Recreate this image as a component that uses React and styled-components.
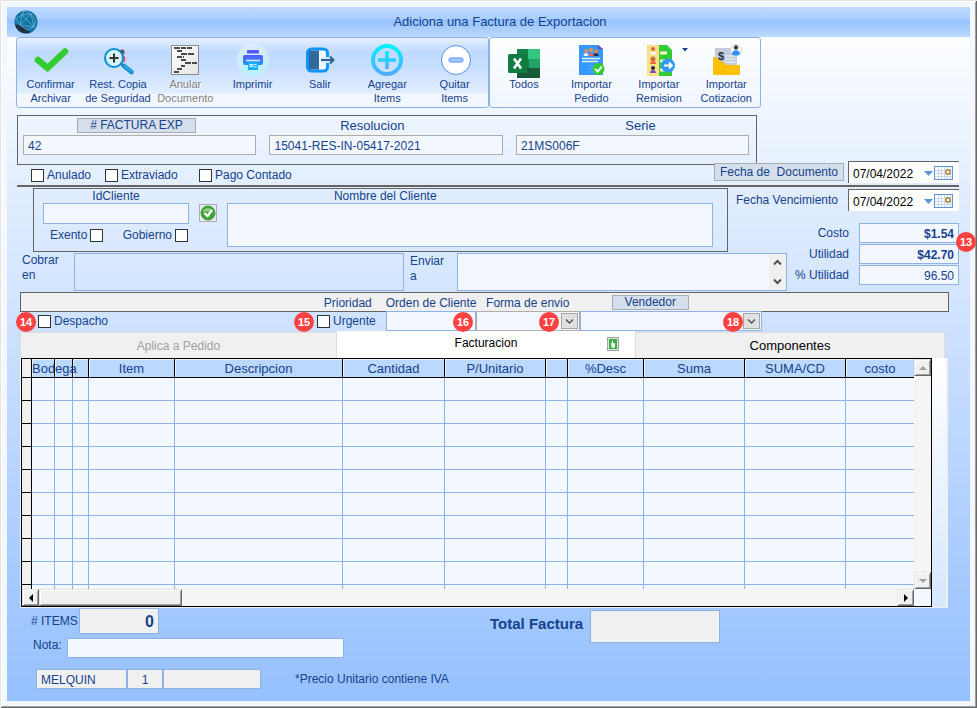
import React from "react";
import styled, { createGlobalStyle } from "styled-components";

const NAVY = "#15428b";
const BLUE_LINE = "#8db2e3";
const FIELD = "#f3f7ff";
const GREY = "#f0f0f0";
const DARK = "#646464";

const GlobalStyle = createGlobalStyle`
  *, *::before, *::after { box-sizing: border-box; }
  body { margin: 0; background: #f4f8fe; }
  body, button, input, select, textarea {
    font-family: "Liberation Sans", Arial, sans-serif;
    font-size: 12px;
    color: ${NAVY};
  }
  button, input, select, textarea { margin: 0; border-radius: 0; outline: none; }
`;

/* ---------- window ---------- */

const Window = styled.div`
  display: flex;
  flex-direction: column;
  min-height: 100vh;
  padding: 7px;
  background: #f4f8fe;
  box-shadow: inset 1px 1px 0 #e3e3e3, inset -1px -1px 0 #696969,
    inset 2px 2px 0 #ffffff, inset -2px -2px 0 #a0a0a0;
`;

const TitleBar = styled.header`
  display: grid;
  grid-template-columns: 40px 1fr 24px;
  align-items: center;
  height: 30px;
  padding-left: 7px;
  background: linear-gradient(#bfdbff 0, #a9ceff 12px, #96c2ff 13px, #bad9ff 30px);
`;

const Title = styled.h1`
  margin: 0;
  font-size: 13px;
  font-weight: 400;
  line-height: 16px;
  text-align: center;
`;

const Surface = styled.main`
  flex: 1;
  padding: 0 11px 12px 10px;
  background: linear-gradient(
    #fdfeff 0,
    #eef5ff 78px,
    #e2eeff 150px,
    #d3e5ff 255px,
    #cbdfff 310px,
    #a8cbff 530px,
    #96c1ff 100%
  );
`;

/* ---------- toolbar ---------- */

const Toolbar = styled.div`
  display: flex;
  width: 79%;
  min-width: 745px;
  margin-left: -1px;
`;

const ToolGroup = styled.div`
  display: grid;
  grid-template-columns: repeat(${(p) => p.$count}, 1fr);
  flex: ${(p) => p.$count} 1 3px;
  height: 71px;
  border: 1px solid ${BLUE_LINE};
  border-radius: 3px;
  background: ${(p) =>
    p.$filled
      ? "linear-gradient(#e6f0ff 0, #bfdaff 14px, #c6deff 28px, #e0edff 55px, #f2f7ff 56px, #f2f7ff 100%)"
      : "transparent"};
`;

const ToolButton = styled.button`
  position: relative;
  display: flex;
  flex-direction: column;
  align-items: center;
  padding: 6px 0 0;
  border: 0;
  background: none;
  font-size: 11px;
  line-height: 14px;
  color: ${(p) => (p.disabled ? "#838383" : NAVY)};
  white-space: pre;
  text-shadow: ${(p) => (p.disabled ? "1px 1px 0 #ffffff" : "none")};

  > svg:first-child { margin-bottom: 1px; overflow: visible; }
`;

const DropMark = styled.svg`
  position: absolute;
  top: 10px;
  right: 5px;
`;

/* ---------- generic controls ---------- */

const TextField = styled.input`
  display: block;
  width: 100%;
  min-width: 0;
  height: ${(p) => p.$h || 20}px;
  padding: 1px 4px 0;
  border: 1px solid ${(p) => (p.$grey ? "#b0acac" : BLUE_LINE)};
  background: ${(p) => (p.$flat ? GREY : FIELD)};
  text-align: ${(p) => p.$align || "left"};
  font-weight: ${(p) => (p.$bold ? 700 : 400)};
  font-size: ${(p) => p.$size || 12}px;
`;

const TextBox = styled.textarea`
  display: block;
  width: 100%;
  min-width: 0;
  height: ${(p) => p.$h}px;
  padding: 3px;
  border: ${(p) => (p.$bare ? "0" : `1px solid ${BLUE_LINE}`)};
  background: ${(p) => (p.$clear ? "transparent" : FIELD)};
  resize: none;
  overflow: hidden;
`;

const Caption = styled.label`
  font-size: ${(p) => p.$size || 12}px;
  line-height: 15px;
  white-space: nowrap;
`;

const PlateButton = styled.button`
  height: ${(p) => p.$h || 15}px;
  padding: 0 5px;
  border: 1px solid #a9adb3;
  background: #d5dfec;
  line-height: 13px;
  white-space: pre;
`;

const Tick = styled.label`
  display: inline-flex;
  align-items: center;
  gap: 3px;
  line-height: 15px;
  white-space: nowrap;

  input {
    appearance: none;
    width: 13px;
    height: 13px;
    border: 1px solid #333333;
    background: #ffffff;
  }
  input:checked { box-shadow: inset 0 0 0 2px #ffffff; background: ${NAVY}; }
`;

const Rule = styled.hr`
  height: 2px;
  margin: 0;
  border: 0;
  background: ${DARK};
`;

const Badge = styled.span`
  position: absolute;
  z-index: 3;
  top: ${(p) => p.$top || 1}px;
  ${(p) => (p.$right !== undefined ? `right: ${p.$right}px;` : `left: ${p.$left}px;`)}
  width: 20px;
  height: 20px;
  border-radius: 50%;
  background: #ff4141;
  color: #ffffff;
  font-size: 11px;
  font-weight: 700;
  line-height: 20px;
  text-align: center;
`;

/* ---------- invoice number block ---------- */

const DocBox = styled.section`
  width: 78.6%;
  min-width: 740px;
  margin-top: 7px;
  padding: 2px 7px 9px 5px;
  border: 1px solid ${DARK};
`;

const DocLabels = styled.div`
  display: grid;
  grid-template-columns: 54fr 119px 144fr 285fr 124fr;
  height: 17px;

  > :nth-child(1) { grid-column: 2; }
  > :nth-child(2) { grid-column: 4; }
  > :nth-child(3) { grid-column: 5; }
`;

const DocFields = styled.div`
  display: grid;
  grid-template-columns: 1fr 1fr 1fr;
  column-gap: 13px;
`;

const FlagsRow = styled.div`
  display: flex;
  justify-content: space-between;
  height: 20px;
`;

const Flags = styled.div`
  display: grid;
  grid-template-columns: 74px 94px auto;
  align-items: center;
  padding-left: 14px;
`;

const DateGroup = styled.div`
  display: flex;
  align-items: center;
  gap: 4px;
  height: 22px;
  margin-top: ${(p) => (p.$raised ? -4 : 1)}px;

  > label { margin-right: 6px; }
`;

const DateBox = styled.div`
  display: flex;
  align-items: center;
  width: 111px;
  height: 22px;
  padding-left: 4px;
  border-top: 1px solid ${DARK};
  border-left: 1px solid ${DARK};
  background: #ffffff;

  input {
    width: 67px;
    padding: 2px 0 0;
    border: 0;
    background: none;
    color: #000000;
  }
  button { padding: 0; border: 0; background: none; line-height: 0; }
`;

/* ---------- client block ---------- */

const ClientArea = styled.section`
  display: grid;
  grid-template-columns: 1fr 59px 172px;
  grid-template-rows: 64px 39px;
  margin-top: 1px;
`;

const ClientBox = styled.div`
  grid-area: 1 / 1;
  display: grid;
  grid-template-columns: 146px 18px 1fr;
  column-gap: 10px;
  height: 64px;
  margin-left: 16px;
  padding: 0 14px 0 9px;
  border: 1px solid ${DARK};
`;

const Stack = styled.div`
  display: flex;
  flex-direction: column;
  text-align: ${(p) => p.$align || "left"};
  > label:first-child { height: 14px; }
`;

const NameCaption = styled(Caption)`
  padding-left: 22%;
`;

const InlineTicks = styled.div`
  display: flex;
  justify-content: space-between;
  margin-top: 4px;
  padding: 0 1px 0 7px;

  ${Tick} { flex-direction: row-reverse; }
`;

const CheckButton = styled.button`
  width: 18px;
  height: 18px;
  margin-top: 15px;
  padding: 0;
  border: 1px solid #a9adb3;
  background: #d5dfec;
  line-height: 0;
`;

const AddressRow = styled.div`
  grid-area: 2 / 1 / 3 / 3;
  z-index: 1;
  display: grid;
  grid-template-columns: 52px 1fr 53px 1fr;
  padding: 1px 0 0 5px;

  > label { padding-right: 4px; white-space: normal; }
  > label + * + label { padding: 1px 0 0 6px; }
`;

const ScrollBox = styled.div`
  display: flex;
  height: 38px;
  border: 1px solid ${BLUE_LINE};
  background: ${FIELD};
`;

const ScrollStrip = styled.div`
  display: flex;
  flex-direction: column;
  justify-content: space-between;
  align-items: center;
  flex: none;
  width: 17px;
  padding: 5px 0;
  background: ${GREY};
`;

const SideArea = styled.div`
  grid-area: 1 / 2 / 3 / 4;
  display: flex;
  flex-direction: column;
  align-items: flex-end;
`;

const Totals = styled.div`
  position: relative;
  display: grid;
  grid-template-columns: auto 100px;
  align-items: center;
  gap: 1px 10px;
  margin-top: 12px;
  text-align: right;
`;

/* ---------- priority block ---------- */

const columns = "297fr 69px 90px 104px 182px 187fr";

const PriorityBar = styled.div`
  display: grid;
  grid-template-columns: ${columns};
  align-items: center;
  height: 20px;
  margin: 1px 10px 0 3px;
  padding-top: 2px;
  border: 1px solid ${DARK};
  background: ${GREY};

  > :nth-child(1) { grid-column: 2; padding-left: 7px; }
  > :nth-child(3) { text-align: center; }
  > :nth-child(4) { width: 77px; margin: -2px 0 0 32px; }
`;

const PriorityRow = styled.div`
  display: grid;
  grid-template-columns: ${columns};
  margin: -1px 10px 0 3px;
`;

const Cell = styled.div`
  position: relative;
  display: flex;
  align-items: center;
  height: 20px;
  padding-left: ${(p) => p.$pad || 0}px;
`;

const Combo = styled.select`
  appearance: none;
  width: 100%;
  height: 20px;
  padding: 0 24px 0 4px;
  border: 1px solid ${(p) => (p.$grey ? "#b0acac" : BLUE_LINE)};
  background: ${FIELD};
`;

const ComboMark = styled.span`
  position: absolute;
  top: 2px;
  right: 2px;
  display: grid;
  place-items: center;
  width: 17px;
  height: 16px;
  border: 1px solid #a6a6a6;
  background: #e0e0e0;
  pointer-events: none;
`;

/* ---------- tabs and grid ---------- */

const Tabs = styled.div`
  display: flex;
  height: 27px;
  margin: 0 14px 0 3px;
`;

const Tab = styled.button`
  display: flex;
  align-items: center;
  justify-content: center;
  flex: ${(p) => p.$grow} 1 0;
  margin-top: ${(p) => (p.$active ? 0 : 1)}px;
  padding: 0 0 ${(p) => (p.$active ? 2 : 0)}px;
  border: 1px solid ${(p) => (p.$active ? "#ffffff" : "#dcdcdc")};
  border-bottom: 0;
  background: ${(p) => (p.$active ? "#ffffff" : GREY)};
  color: ${(p) => (p.disabled ? "#a0a0a0" : "#000000")};
  font-size: ${(p) => p.$size || 12}px;
`;

const TabBody = styled.span`
  display: grid;
  grid-template-columns: 1fr auto 1fr;
  align-items: center;
  width: 100%;

  > span { grid-column: 2; padding-bottom: 2px; }
  > svg { margin-left: 90px; }
`;

const Pane = styled.div`
  margin: 0 11px 0 3px;
  padding: 0 14px 0 1px;
  border: solid ${GREY};
  border-width: 0 2px 1px 0;
  background: linear-gradient(#ffffff, #d6e7ff);
`;

const GridFrame = styled.div`
  display: grid;
  grid-template-columns: 1fr 17px;
  grid-template-rows: 230px 17px;
  border: 1px solid #000000;
  background: ${FIELD};
`;

const GridView = styled.div`
  overflow: hidden;
`;

const Grid = styled.table`
  width: 100%;
  table-layout: fixed;
  border-collapse: separate;
  border-spacing: 0;

  td {
    height: 23px;
    padding: 0;
    border-right: 1px solid ${BLUE_LINE};
    border-bottom: 1px solid ${BLUE_LINE};
  }
  th:first-child, td:first-child {
    border-right: 1px solid #000000;
    border-bottom: 1px solid #000000;
    background: ${GREY};
  }
  th:last-child, td:last-child { border-right: 0; }
`;

const HeadCell = styled.th`
  height: 19px;
  padding: 1px 0 0;
  border-right: 1px solid #000000;
  border-bottom: 1px solid #000000;
  background: #bbd8ff;
  box-shadow: inset 1px 1px 0 #e8f2ff;
  font-size: 13px;
  font-weight: 400;
  line-height: 17px;
  text-align: ${(p) => p.$align || "center"};
  white-space: nowrap;
`;

const Col = styled.col`
  width: ${(p) => p.$w}px;
`;

const Track = styled.div`
  display: flex;
  flex-direction: ${(p) => (p.$vertical ? "column" : "row")};
  justify-content: space-between;
  background: repeating-conic-gradient(#ededed 0 25%, #ffffff 0 50%) 0 0 / 2px 2px;
`;

const ScrollKey = styled.button`
  display: grid;
  place-items: center;
  width: 17px;
  height: 17px;
  padding: 0;
  border: 1px solid;
  border-color: #e3e3e3 #696969 #696969 #e3e3e3;
  box-shadow: inset 1px 1px 0 #ffffff, inset -1px -1px 0 #a0a0a0;
  background: ${GREY};
`;

const Thumb = styled.div`
  flex: 0 0 16%;
  margin-right: auto;
  border: 1px solid;
  border-color: #e3e3e3 #696969 #696969 #e3e3e3;
  box-shadow: inset 1px 1px 0 #ffffff, inset -1px -1px 0 #a0a0a0;
  background: ${GREY};
`;

/* ---------- footer ---------- */

const Footer = styled.footer`
  display: grid;
  grid-template-columns: 327px 1fr;
  column-gap: 146px;
`;

const FooterLeft = styled.div`
  display: flex;
  flex-direction: column;
`;

const ItemsRow = styled.div`
  display: grid;
  grid-template-columns: 46px 80px;
  gap: 2px;
  align-items: center;
  padding-left: 14px;
`;

const NoteRow = styled.div`
  display: grid;
  grid-template-columns: 34px 277px;
  margin-top: 4px;
  padding-left: 16px;
`;

const UserRow = styled.div`
  display: grid;
  grid-template-columns: 91px 36px 98px 1fr;
  align-items: center;
  margin-top: 11px;
  padding-left: 19px;
`;

const Hint = styled.span`
  padding-left: 34px;
  line-height: 15px;
  white-space: nowrap;
`;

const TotalRow = styled.div`
  display: grid;
  grid-template-columns: 100px 130px;
  align-items: center;
  height: 33px;
  margin-top: 2px;
`;

const TotalLabel = styled.label`
  padding-bottom: 5px;
  font-size: 15px;
  font-weight: 700;
  line-height: 18px;
  white-space: nowrap;
`;

/* ---------- icons ---------- */

const Icon = ({ children }) => (
  <svg width="32" height="32" viewBox="0 0 32 32" aria-hidden="true">
    {children}
  </svg>
);

const GlobeIcon = () => (
  <svg width="24" height="24" viewBox="0 0 24 24" aria-hidden="true">
    <circle cx="12" cy="12" r="11.5" fill="#0d74a6" />
    <path d="M1 14.500 6 15l7 5 4 2.300A11.500 11.500 0 0 1 1 14.500Z" fill="#22303f" />
    <g fill="none" stroke="#7db4d2" strokeWidth="0.7">
      <path d="M10 .8 17 4l4.500 6L20 17l-7 3-7-5L1.500 9 8 5Z" />
      <path d="M10 .8 8 5 6 15M8 5l9-1M17 4 6 15M17 4l3 13M8 5l12 12M6 15l14 2" />
    </g>
  </svg>
);

const ConfirmIcon = () => (
  <Icon>
    <path d="m3 16 9.500 8L30 7.500" fill="none" stroke="#33cc33" strokeWidth="6.500" strokeLinejoin="miter" strokeLinecap="round" />
  </Icon>
);

const RestoreIcon = () => (
  <Icon>
    <circle cx="20" cy="8" r="2.500" fill="#6b4b4b" />
    <path d="M20 10c3 1 4 4 3 8h-4Z" fill="#f05a5a" />
    <path d="m18 19 4.500 3.500" stroke="#5a6270" strokeWidth="2.500" />
    <path d="m22 22 7.500 6" stroke="#0b8fd0" strokeWidth="4.500" strokeLinecap="round" />
    <path d="m22.500 22 7 5.500" stroke="#39b7f0" strokeWidth="1.500" strokeLinecap="round" />
    <circle cx="12" cy="14" r="9" fill="#d4f3fb" stroke="#0b8fd0" strokeWidth="2" />
    <path d="M12 9.500v9M7.500 14h9" stroke="#333333" strokeWidth="2" />
  </Icon>
);

const VoidIcon = () => (
  <Icon>
    <defs>
      <linearGradient id="sheet" x1="0" y1="0" x2="1" y2="1">
        <stop offset="0" stopColor="#ffffff" />
        <stop offset="1" stopColor="#e4e4e4" />
      </linearGradient>
    </defs>
    <rect x="2.500" y="1.500" width="27" height="29" fill="url(#sheet)" stroke="#8c8c8c" />
    <g stroke="#4a4a4a" strokeWidth="2">
      <path d="M5 4h6M12 4h5M18 4h5M8 7h5M12 10h6M19 10h6M8 13h5M14 13h1M12 16h5M16 19h6M23 19h5M12 22h4M8 25h5M5 28h5" />
    </g>
  </Icon>
);

const PrintIcon = () => (
  <Icon>
    <defs>
      <linearGradient id="ink" x1="0" y1="0" x2="0" y2="1">
        <stop offset="0" stopColor="#5558ff" />
        <stop offset="1" stopColor="#2196ff" />
      </linearGradient>
      <linearGradient id="halo" x1="0" y1="0" x2="0" y2="1">
        <stop offset="0" stopColor="#ddeafc" />
        <stop offset="1" stopColor="#b8f0fd" />
      </linearGradient>
    </defs>
    <circle cx="16" cy="16" r="16" fill="url(#halo)" />
    <path d="M10 9.500V7q0-1 1-1h10q1 0 1 1v2.500Z" fill="#5558ff" />
    <rect x="6" y="11" width="20" height="10" rx="2" fill="url(#ink)" />
    <path d="M9 16.500h14" stroke="#d8eeff" strokeWidth="1.500" />
    <rect x="11" y="18" width="10" height="8" fill="#12b2fb" />
    <path d="M13 20.500h3v2h-3ZM17.500 20.500h2M17.500 23h2" stroke="#ffffff" strokeWidth="1" fill="none" />
  </Icon>
);

const ExitIcon = () => (
  <Icon>
    <rect x="3.500" y="5" width="20" height="22" rx="4" fill="#f4f8ff" stroke="#0f94ff" strokeWidth="3" />
    <path d="M5 6.500h10v19H5Z" fill="#306a9c" />
    <rect x="17" y="13" width="8" height="6" fill="#d8e8ff" />
    <path d="M17 16h13M26 12.500l3.500 3.500-3.500 3.500" fill="none" stroke="#2d5f8e" strokeWidth="2" />
  </Icon>
);

const AddIcon = () => (
  <Icon>
    <defs>
      <linearGradient id="plus" x1="0" y1="0" x2="0" y2="1">
        <stop offset="0" stopColor="#00f2fe" />
        <stop offset="1" stopColor="#4facfe" />
      </linearGradient>
    </defs>
    <circle cx="16" cy="16" r="14" fill="none" stroke="url(#plus)" strokeWidth="4" />
    <path d="M14.200 7h3.600v7.200H25v3.600h-7.200V25h-3.600v-7.200H7v-3.600h7.200Z" fill="url(#plus)" />
  </Icon>
);

const RemoveIcon = () => (
  <Icon>
    <circle cx="17" cy="16" r="14.500" fill="#ffffff" stroke="#4f8ff7" />
    <rect x="10" y="14" width="14" height="4" rx="1.500" fill="#a4c8ff" stroke="#4f8ff7" />
  </Icon>
);

const ExcelIcon = () => (
  <Icon>
    <path d="M9 5h23v29H9Z" fill="#21a366" />
    <path d="M9 5h12v10H9Z" fill="#15834a" />
    <path d="M20 5h12v10H20Z" fill="#33c481" />
    <path d="M9 15h12v10H9Z" fill="#107c41" />
    <path d="M9 24h23v10H9Z" fill="#185c37" />
    <rect x="0" y="10" width="19" height="19" rx="1.500" fill="#107c41" />
    <path d="m6 14.500 7 10M13 14.500l-7 10" stroke="#ffffff" strokeWidth="2.600" />
  </Icon>
);

const OrderIcon = () => (
  <Icon>
    <path d="M4 1h19l5 4v26H4Z" fill="#3399ff" />
    <path d="M23 1v4h5Z" fill="#7b3fb5" />
    <g fill="#d99060">
      <circle cx="11" cy="7" r="2" />
      <circle cx="16" cy="6" r="2.300" />
      <circle cx="21" cy="7.500" r="2" />
    </g>
    <path d="M8.500 12c0-4 5-4 5 0Z" fill="#e8f1fb" />
    <path d="M13.500 12c0-4 5-4 5 0Z" fill="#ef5b62" />
    <path d="M18.500 12c0-4 5-4 5 0Z" fill="#27313f" />
    <path d="M7 14.500h18M7 17.500h16" stroke="#e6f3e9" strokeWidth="1.600" />
    <path d="M12 22h6M14 25h4M12 28h6" stroke="#55aaff" strokeWidth="1" />
    <circle cx="23.500" cy="25" r="6" fill="#33cc33" />
    <path d="m20 25 2.800 2.500 4-5" fill="none" stroke="#ffffff" strokeWidth="2" />
  </Icon>
);

const RemissionIcon = () => (
  <Icon>
    <path d="M16 1h8l5 5v26H16Z" fill="#33cc33" />
    <rect x="4" y="1" width="12" height="31" fill="#fbe08a" />
    <path d="M17 9h7M17 17h5M17 26h5" stroke="#fff5c4" strokeWidth="3" />
    <g fill="#cf6a4c">
      <circle cx="10" cy="5" r="2" />
      <circle cx="10" cy="15" r="2.500" />
    </g>
    <circle cx="10" cy="24" r="2" fill="#2b2b3b" />
    <path d="M7 10.500c0-4 6-4 6 0Z" fill="#f4f4f4" />
    <path d="M7 20c0-4 6-4 6 0Z" fill="#f06a35" />
    <path d="M7 29c0-4 6-4 6 0Z" fill="#7050c8" />
    <circle cx="25" cy="21.500" r="7" fill="#3399ff" />
    <path d="M21 21.500h8M26 18.500l3 3-3 3" fill="none" stroke="#ffffff" strokeWidth="1.800" />
  </Icon>
);

const QuoteIcon = () => (
  <Icon>
    <path d="M5 4h22v22H5Z" fill="#c3cad9" />
    <path d="M15 12h12M15 15h10M15 18h12" stroke="#e2e7f2" strokeWidth="1.500" />
    <circle cx="26" cy="6" r="5.500" fill="#ffffff" stroke="#c8cdd8" strokeWidth="0.800" />
    <circle cx="26" cy="3.500" r="2.200" fill="#4b3a3a" />
    <path d="M22 10c0-5 8-5 8 0-2 2-6 2-8 0Z" fill="#2f8fff" />
    <path d="M3 13h2l12 8h13v9q0 1-1 1H4q-1 0-1-1Z" fill="#ffc107" />
    <text x="8" y="15.500" fontFamily="Liberation Sans, sans-serif" fontSize="11" fontWeight="700" fill="#27313f">
      $
    </text>
  </Icon>
);

const CalendarIcon = () => (
  <svg width="35" height="16" viewBox="0 0 35 16" aria-hidden="true">
    <path d="M4 6h9L8.500 11Z" fill="#5b93dc" />
    <rect x="14.500" y="1.500" width="18" height="13" fill="#ffffff" stroke="#5b93dc" />
    <path d="M15 5.500h17M15 8.500h17M15 11.500h17M18.500 2v12M21.500 2v12M24.500 2v12M27.500 2v12M30.500 2v12" stroke="#c9d8ee" />
    <rect x="26" y="5" width="4" height="4" rx="1" fill="#ffffff" stroke="#b89a58" strokeWidth="2" />
  </svg>
);

const OkIcon = () => (
  <svg width="16" height="16" viewBox="0 0 16 16" aria-hidden="true">
    <rect width="16" height="16" fill="#e6eaee" />
    <circle cx="8" cy="8" r="7" fill="#3fa535" stroke="#2f7d2a" strokeWidth="0.700" />
    <path d="M2.500 6.500a6 6 0 0 1 11 0Z" fill="#8fce7e" />
    <path d="m4.500 8 3 3 4.500-6" fill="none" stroke="#ffffff" strokeWidth="2.200" />
  </svg>
);

const Chevron = ({ up, size = 9 }) => (
  <svg width={size} height="7" viewBox="0 0 9 7" aria-hidden="true">
    <path
      d={up ? "M1 5.500 4.500 2 8 5.500" : "M1 1.500 4.500 5 8 1.500"}
      fill="none"
      stroke="#505050"
      strokeWidth={size > 9 ? 1.4 : 2}
    />
  </svg>
);

const TouchIcon = () => (
  <svg width="12" height="14" viewBox="0 0 12 14" aria-hidden="true">
    <rect x="0.500" y="0.500" width="11" height="13" fill="#d8e6dd" stroke="#9ea3a8" />
    <rect x="2" y="2" width="8" height="10" fill="#3fb043" />
    <path d="M4 5.500 5 6V3.500h1V6h2v4q-2 2-3.500 0Z" fill="#ffffff" />
  </svg>
);

const Arrow = ({ d, fill = "#000000" }) => (
  <svg width="8" height="8" viewBox="0 0 8 8" aria-hidden="true">
    <path d={d} fill={fill} />
  </svg>
);

/* ---------- data ---------- */

const mainTools = [
  { icon: ConfirmIcon, text: "Confirmar\nArchivar" },
  { icon: RestoreIcon, text: "Rest. Copia\nde Seguridad" },
  { icon: VoidIcon, text: "Anular\nDocumento", disabled: true },
  { icon: PrintIcon, text: "Imprimir" },
  { icon: ExitIcon, text: "Salir" },
  { icon: AddIcon, text: "Agregar\nItems" },
  { icon: RemoveIcon, text: "Quitar\nItems" },
];

const importTools = [
  { icon: ExcelIcon, text: "Todos" },
  { icon: OrderIcon, text: "Importar\nPedido" },
  { icon: RemissionIcon, text: "Importar\nRemision", menu: true },
  { icon: QuoteIcon, text: "Importar\nCotizacion" },
];

const gridColumns = [
  { text: "", width: 10 },
  { text: "Bod", width: 23, align: "left" },
  { text: "ega", width: 18, align: "left" },
  { text: "", width: 16 },
  { text: "Item", width: 86 },
  { text: "Descripcion", width: 168 },
  { text: "Cantidad", width: 102 },
  { text: "P/Unitario", width: 101 },
  { text: "", width: 22 },
  { text: "%Desc", width: 76 },
  { text: "Suma", width: 101 },
  { text: "SUMA/CD", width: 101 },
  { text: "costo", width: 68 },
];

/* ---------- composed parts ---------- */

const Tools = ({ items, filled }) => (
  <ToolGroup $count={items.length} $filled={filled}>
    {items.map(({ icon: Glyph, text, disabled, menu }) => (
      <ToolButton key={text} type="button" disabled={disabled}>
        <Glyph />
        {text}
        {menu && (
          <DropMark width="6" height="4" viewBox="0 0 6 4" aria-hidden="true">
            <path d="M0 0h6L3 3.500Z" fill={NAVY} />
          </DropMark>
        )}
      </ToolButton>
    ))}
  </ToolGroup>
);

const CheckItem = ({ label }) => (
  <Tick>
    <input type="checkbox" />
    {label}
  </Tick>
);

const DateInput = ({ id, label }) => (
  <DateBox>
    <input id={id} type="text" aria-label={label} defaultValue="07/04/2022" />
    <button type="button" aria-label={`Calendario ${label}`}>
      <CalendarIcon />
    </button>
  </DateBox>
);

const ComboBox = ({ label, grey }) => (
  <>
    <Combo $grey={grey} aria-label={label} defaultValue="">
      <option value=""></option>
    </Combo>
    <ComboMark>
      <Chevron size={11} />
    </ComboMark>
  </>
);

export default function App() {
  return (
    <>
      <GlobalStyle />
      <Window>
        <TitleBar>
          <GlobeIcon />
          <Title>Adiciona una Factura de Exportacion</Title>
        </TitleBar>

        <Surface>
          <Toolbar>
            <Tools items={mainTools} filled />
            <Tools items={importTools} />
          </Toolbar>

          <DocBox>
            <DocLabels>
              <PlateButton type="button"># FACTURA EXP</PlateButton>
              <Caption $size={13} htmlFor="resolucion">Resolucion</Caption>
              <Caption $size={13} htmlFor="serie">Serie</Caption>
            </DocLabels>
            <DocFields>
              <TextField $grey aria-label="# Factura Exp" defaultValue="42" />
              <TextField $grey id="resolucion" defaultValue="15041-RES-IN-05417-2021" />
              <TextField $grey id="serie" defaultValue="21MS006F" />
            </DocFields>
          </DocBox>

          <FlagsRow>
            <Flags>
              <CheckItem label="Anulado" />
              <CheckItem label="Extraviado" />
              <CheckItem label="Pago Contado" />
            </Flags>
            <DateGroup $raised>
              <PlateButton type="button" $h={18}>{"Fecha de  Documento"}</PlateButton>
              <DateInput id="fecha-doc" label="Fecha de Documento" />
            </DateGroup>
          </FlagsRow>
          <Rule />

          <ClientArea>
            <ClientBox>
              <Stack $align="center">
                <Caption htmlFor="id-cliente">IdCliente</Caption>
                <TextField id="id-cliente" $h={21} />
                <InlineTicks>
                  <CheckItem label="Exento" />
                  <CheckItem label="Gobierno" />
                </InlineTicks>
              </Stack>
              <CheckButton type="button" aria-label="Validar cliente">
                <OkIcon />
              </CheckButton>
              <Stack>
                <NameCaption htmlFor="nombre">Nombre del Cliente</NameCaption>
                <TextBox id="nombre" $h={44} />
              </Stack>
            </ClientBox>

            <AddressRow>
              <Caption htmlFor="cobrar">Cobrar en</Caption>
              <TextBox id="cobrar" $h={38} $clear />
              <Caption htmlFor="enviar">Enviar<br />a</Caption>
              <ScrollBox>
                <TextBox id="enviar" $h={36} $bare />
                <ScrollStrip>
                  <Chevron up />
                  <Chevron />
                </ScrollStrip>
              </ScrollBox>
            </AddressRow>

            <SideArea>
              <DateGroup>
                <Caption htmlFor="fecha-ven">Fecha Vencimiento</Caption>
                <DateInput id="fecha-ven" label="Fecha Vencimiento" />
              </DateGroup>
              <Totals>
                <Caption htmlFor="costo">Costo</Caption>
                <TextField id="costo" $bold $align="right" defaultValue="$1.54" />
                <Caption htmlFor="utilidad">Utilidad</Caption>
                <TextField id="utilidad" $bold $align="right" defaultValue="$42.70" />
                <Caption htmlFor="putilidad">% Utilidad</Caption>
                <TextField id="putilidad" $align="right" defaultValue="96.50" />
                <Badge $top={9} $right={-17}>13</Badge>
              </Totals>
            </SideArea>
          </ClientArea>

          <PriorityBar>
            <Caption as="span">Prioridad</Caption>
            <Caption htmlFor="orden">Orden de Cliente</Caption>
            <Caption as="span">Forma de envio</Caption>
            <PlateButton type="button">Vendedor</PlateButton>
          </PriorityBar>
          <PriorityRow>
            <Cell $pad={18}>
              <Badge $left={-4}>14</Badge>
              <CheckItem label="Despacho" />
            </Cell>
            <Cell>
              <Badge $left={-23}>15</Badge>
              <CheckItem label="Urgente" />
            </Cell>
            <Cell>
              <TextField id="orden" />
              <Badge $right={3}>16</Badge>
            </Cell>
            <Cell>
              <ComboBox label="Forma de envio" grey />
              <Badge $right={21}>17</Badge>
            </Cell>
            <Cell>
              <ComboBox label="Vendedor" />
              <Badge $right={19}>18</Badge>
            </Cell>
          </PriorityRow>

          <Tabs role="tablist">
            <Tab type="button" role="tab" $grow={317} disabled>Aplica a Pedido</Tab>
            <Tab type="button" role="tab" $grow={298} $active>
              <TabBody>
                <span>Facturacion</span>
                <TouchIcon />
              </TabBody>
            </Tab>
            <Tab type="button" role="tab" $grow={310} $size={13}>Componentes</Tab>
          </Tabs>

          <Pane>
            <GridFrame>
              <GridView>
                <Grid>
                  <colgroup>
                    {gridColumns.map((c, i) => (
                      <Col key={i} $w={c.width} />
                    ))}
                  </colgroup>
                  <thead>
                    <tr>
                      {gridColumns.map((c, i) => (
                        <HeadCell key={i} $align={c.align}>{c.text}</HeadCell>
                      ))}
                    </tr>
                  </thead>
                  <tbody>
                    {Array.from({ length: 10 }, (_, r) => (
                      <tr key={r}>
                        {gridColumns.map((c, i) => (
                          <td key={i} />
                        ))}
                      </tr>
                    ))}
                  </tbody>
                </Grid>
              </GridView>
              <Track $vertical>
                <ScrollKey type="button" aria-label="Subir"><Arrow d="M0 6h8L4 2Z" fill="#a0a0a0" /></ScrollKey>
                <ScrollKey type="button" aria-label="Bajar"><Arrow d="M0 2h8L4 6Z" fill="#a0a0a0" /></ScrollKey>
              </Track>
              <Track>
                <ScrollKey type="button" aria-label="Izquierda"><Arrow d="M6 0v8L2 4Z" /></ScrollKey>
                <Thumb />
                <ScrollKey type="button" aria-label="Derecha"><Arrow d="M2 0v8l4-4Z" /></ScrollKey>
              </Track>
            </GridFrame>
          </Pane>

          <Footer>
            <FooterLeft>
              <ItemsRow>
                <Caption htmlFor="items"># ITEMS</Caption>
                <TextField id="items" $flat $bold $h={26} $size={16} $align="right" defaultValue="0" />
              </ItemsRow>
              <NoteRow>
                <Caption htmlFor="nota">Nota:</Caption>
                <TextField id="nota" />
              </NoteRow>
              <UserRow>
                <TextField $flat aria-label="Usuario" defaultValue="MELQUIN" />
                <TextField $flat $align="center" aria-label="Codigo" defaultValue="1" />
                <TextField $flat aria-label="Referencia" />
                <Hint>*Precio Unitario contiene IVA</Hint>
              </UserRow>
            </FooterLeft>
            <TotalRow>
              <TotalLabel htmlFor="total">Total Factura</TotalLabel>
              <TextField id="total" $flat $h={33} $bold $align="right" />
            </TotalRow>
          </Footer>
        </Surface>
      </Window>
    </>
  );
}
